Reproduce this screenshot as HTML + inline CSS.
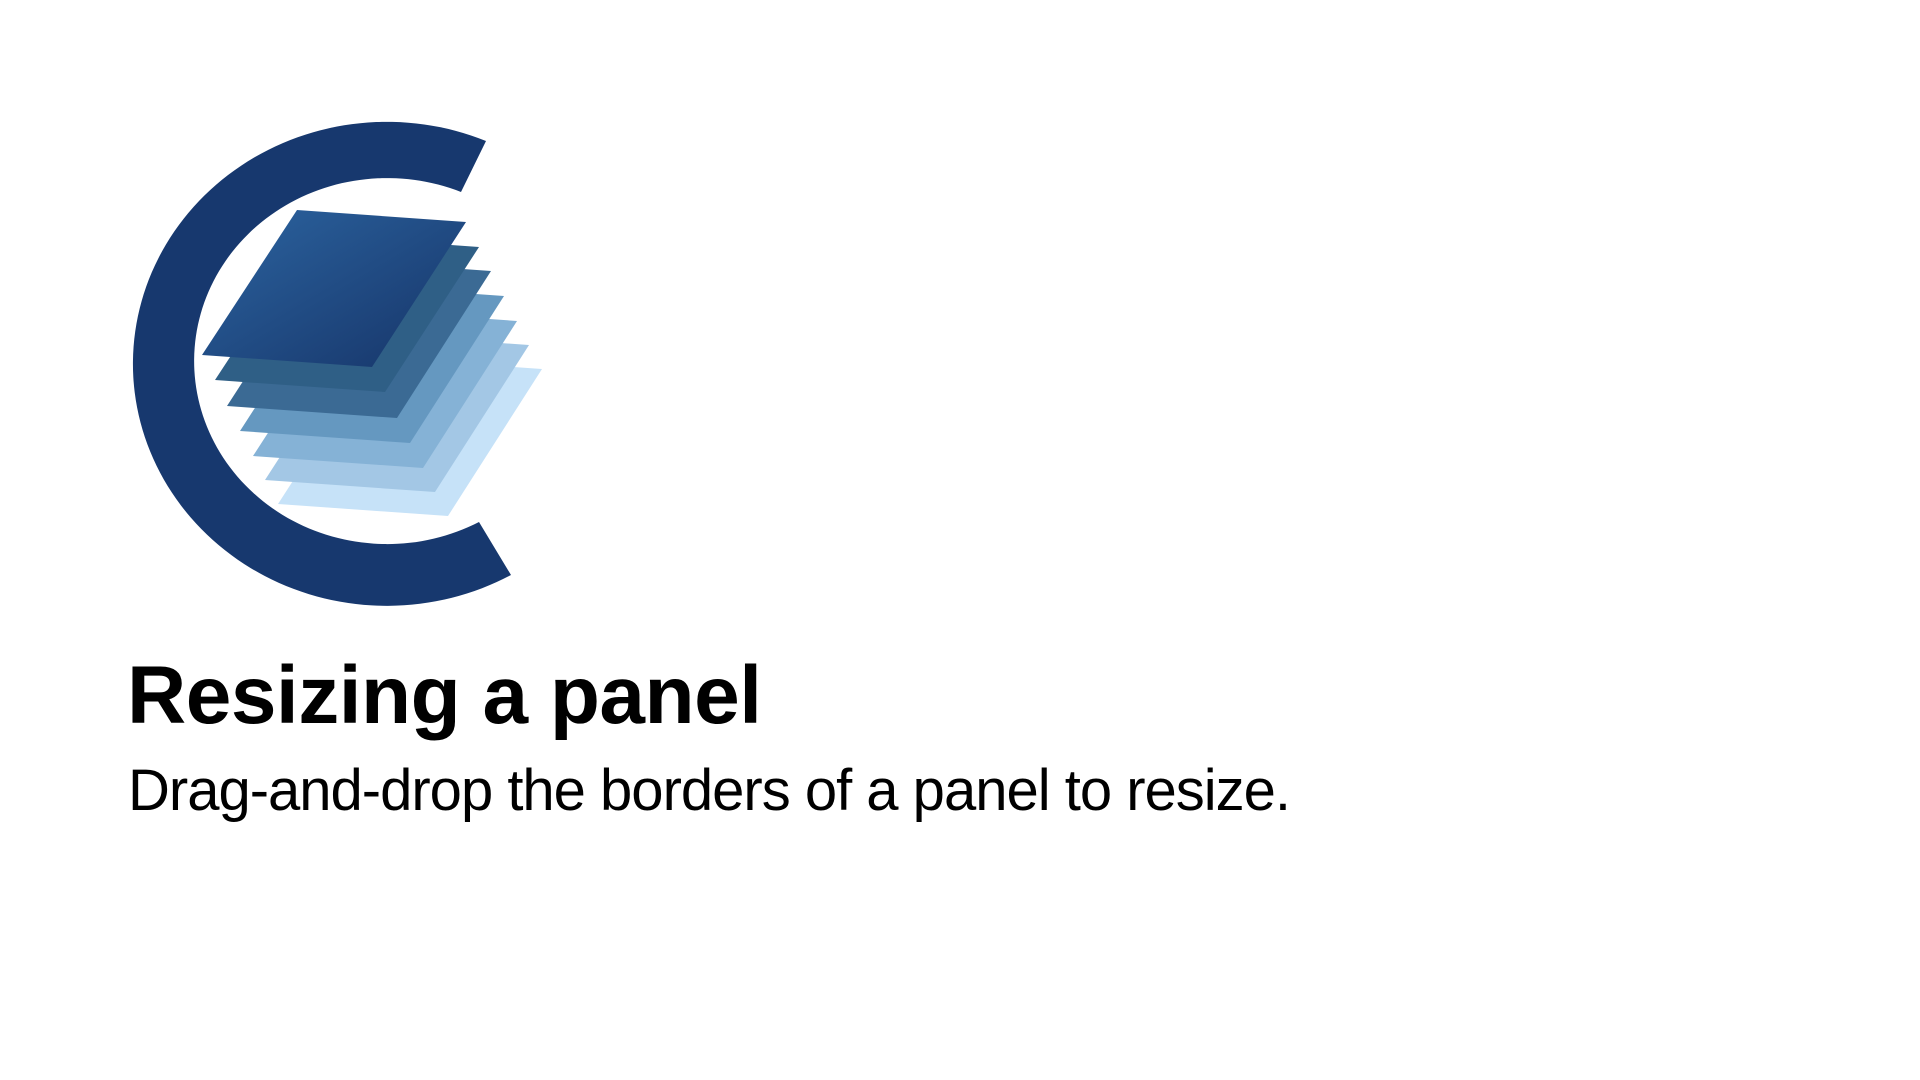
<!DOCTYPE html>
<html><head><meta charset="utf-8"><style>
html,body{margin:0;padding:0;background:#fff;width:1920px;height:1080px;overflow:hidden}
.t{position:absolute;font-family:"Liberation Sans",Arial,sans-serif;color:#000;line-height:1;white-space:nowrap}
</style></head><body>
<svg style="position:absolute;left:0;top:0" width="1920" height="1080" viewBox="0 0 1920 1080">
<defs>
<linearGradient id="g0" x1="0" y1="0" x2="1" y2="1"><stop offset="0" stop-color="#2c64a0"/><stop offset="1" stop-color="#163468"/></linearGradient>
</defs>
<path fill="#17386e" fill-rule="evenodd" d="M486,141 A254,242 0 1 0 511,575 L479,522 A193,183 0 1 1 461,192 Z"/>
<g>
<polygon fill="#c6e2f8" points="373,357 542,369 448,516 278,504"/>
<polygon fill="#a3c7e5" points="360,333 529,345 435,492 265,480"/>
<polygon fill="#85b2d6" points="348,309 517,321 423,468 253,456"/>
<polygon fill="#6598c0" points="335,284 504,296 410,443 240,431"/>
<polygon fill="#3b6a94" points="322,259 491,271 397,418 227,406"/>
<polygon fill="#2f5f86" points="310,235 479,247 385,392 215,380"/>
<polygon fill="url(#g0)" points="297,210 466,222 372,367 202,355"/>
</g>
</svg>
<div class="t" style="left:127px;top:655px;font-size:82px;font-weight:bold;letter-spacing:-0.5px">Resizing a panel</div>
<div class="t" style="left:128px;top:762px;font-size:58px;letter-spacing:-1px">Drag-and-drop the borders of a panel to resize.</div>
</body></html>
